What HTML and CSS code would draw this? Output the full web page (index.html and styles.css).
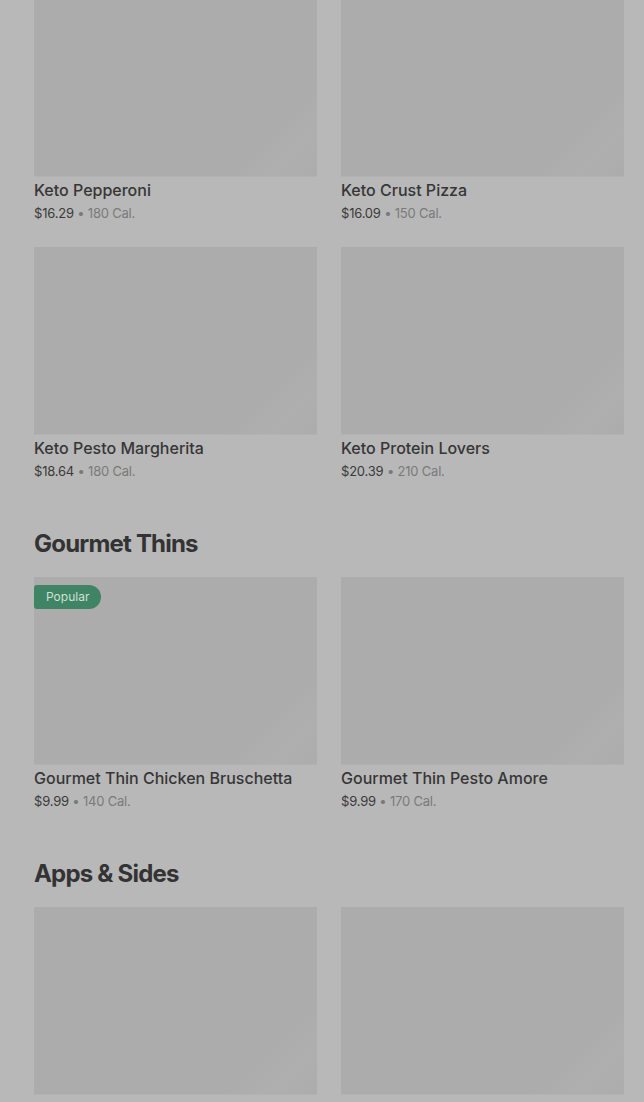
FILE: index.html
```html
<!DOCTYPE html>
<html lang="en">
<head>
  <meta charset="UTF-8">
  <title>Menu</title>
  <meta name="viewport" content="width=device-width, initial-scale=1.0">
  <link rel="stylesheet" href="styles.css">
</head>
<body>
  <main class="menu">
    <section class="section first">
      <div class="grid">
        <div class="item">
          <div class="thumb"></div>
          <div class="name">Keto Pepperoni</div>
          <div class="meta"><span class="price">$16.29</span> • 180 Cal.</div>
        </div>
        <div class="item">
          <div class="thumb"></div>
          <div class="name">Keto Crust Pizza</div>
          <div class="meta"><span class="price">$16.09</span> • 150 Cal.</div>
        </div>
        <div class="item">
          <div class="thumb"></div>
          <div class="name">Keto Pesto Margherita</div>
          <div class="meta"><span class="price">$18.64</span> • 180 Cal.</div>
        </div>
        <div class="item">
          <div class="thumb"></div>
          <div class="name">Keto Protein Lovers</div>
          <div class="meta"><span class="price">$20.39</span> • 210 Cal.</div>
        </div>
      </div>
    </section>

    <section class="section">
      <h2>Gourmet Thins</h2>
      <div class="grid">
        <div class="item">
          <div class="thumb">
            <span class="badge">Popular</span>
          </div>
          <div class="name">Gourmet Thin Chicken Bruschetta</div>
          <div class="meta"><span class="price">$9.99</span> • 140 Cal.</div>
        </div>
        <div class="item">
          <div class="thumb"></div>
          <div class="name">Gourmet Thin Pesto Amore</div>
          <div class="meta"><span class="price">$9.99</span> • 170 Cal.</div>
        </div>
      </div>
    </section>

    <section class="section">
      <h2>Apps &amp; Sides</h2>
      <div class="grid">
        <div class="item">
          <div class="thumb"></div>
        </div>
        <div class="item">
          <div class="thumb"></div>
        </div>
      </div>
    </section>
  </main>
</body>
</html>
```

FILE: styles.css
```css
html, body {
  margin: 0;
  padding: 0;
}
body {
  background: #b8b8b8;
  color: #333;
  font-family: Inter, "Noto Sans", sans-serif;
  overflow: hidden;
}

.menu {
  margin-top: -11px;
  padding: 0 20px 0 34px;
}

.section {
  padding-top: 47px;
}
.section.first {
  padding-top: 0;
}

h2 {
  margin: 0 0 17px;
  font-size: 24px;
  line-height: 32px;
  font-weight: 700;
  letter-spacing: -0.8px;
  color: #333;
}

.grid {
  display: grid;
  grid-template-columns: 283px 283px;
  column-gap: 24px;
  row-gap: 24px;
}

.thumb {
  position: relative;
  box-sizing: border-box;
  height: 188px;
  background: linear-gradient(135deg, #acacac 80%, #afafaf 90%, #acacac 100%);
  border-bottom: 1px solid #b2b2b2;
}

.name {
  margin-top: 2px;
  font-size: 16px;
  line-height: 22px;
  font-weight: 500;
  color: #363636;
}

.meta {
  margin-top: 2px;
  font-size: 13px;
  line-height: 20px;
  letter-spacing: -0.2px;
  color: #7a7a7a;
}
.price {
  color: #3a3a3a;
}

.badge {
  position: absolute;
  top: 8px;
  left: 0;
  padding: 0 12px;
  height: 24px;
  line-height: 24px;
  font-size: 12px;
  color: #cfe0d6;
  background: #3f8464;
  border-radius: 3px 12px 12px 3px;
}
```
